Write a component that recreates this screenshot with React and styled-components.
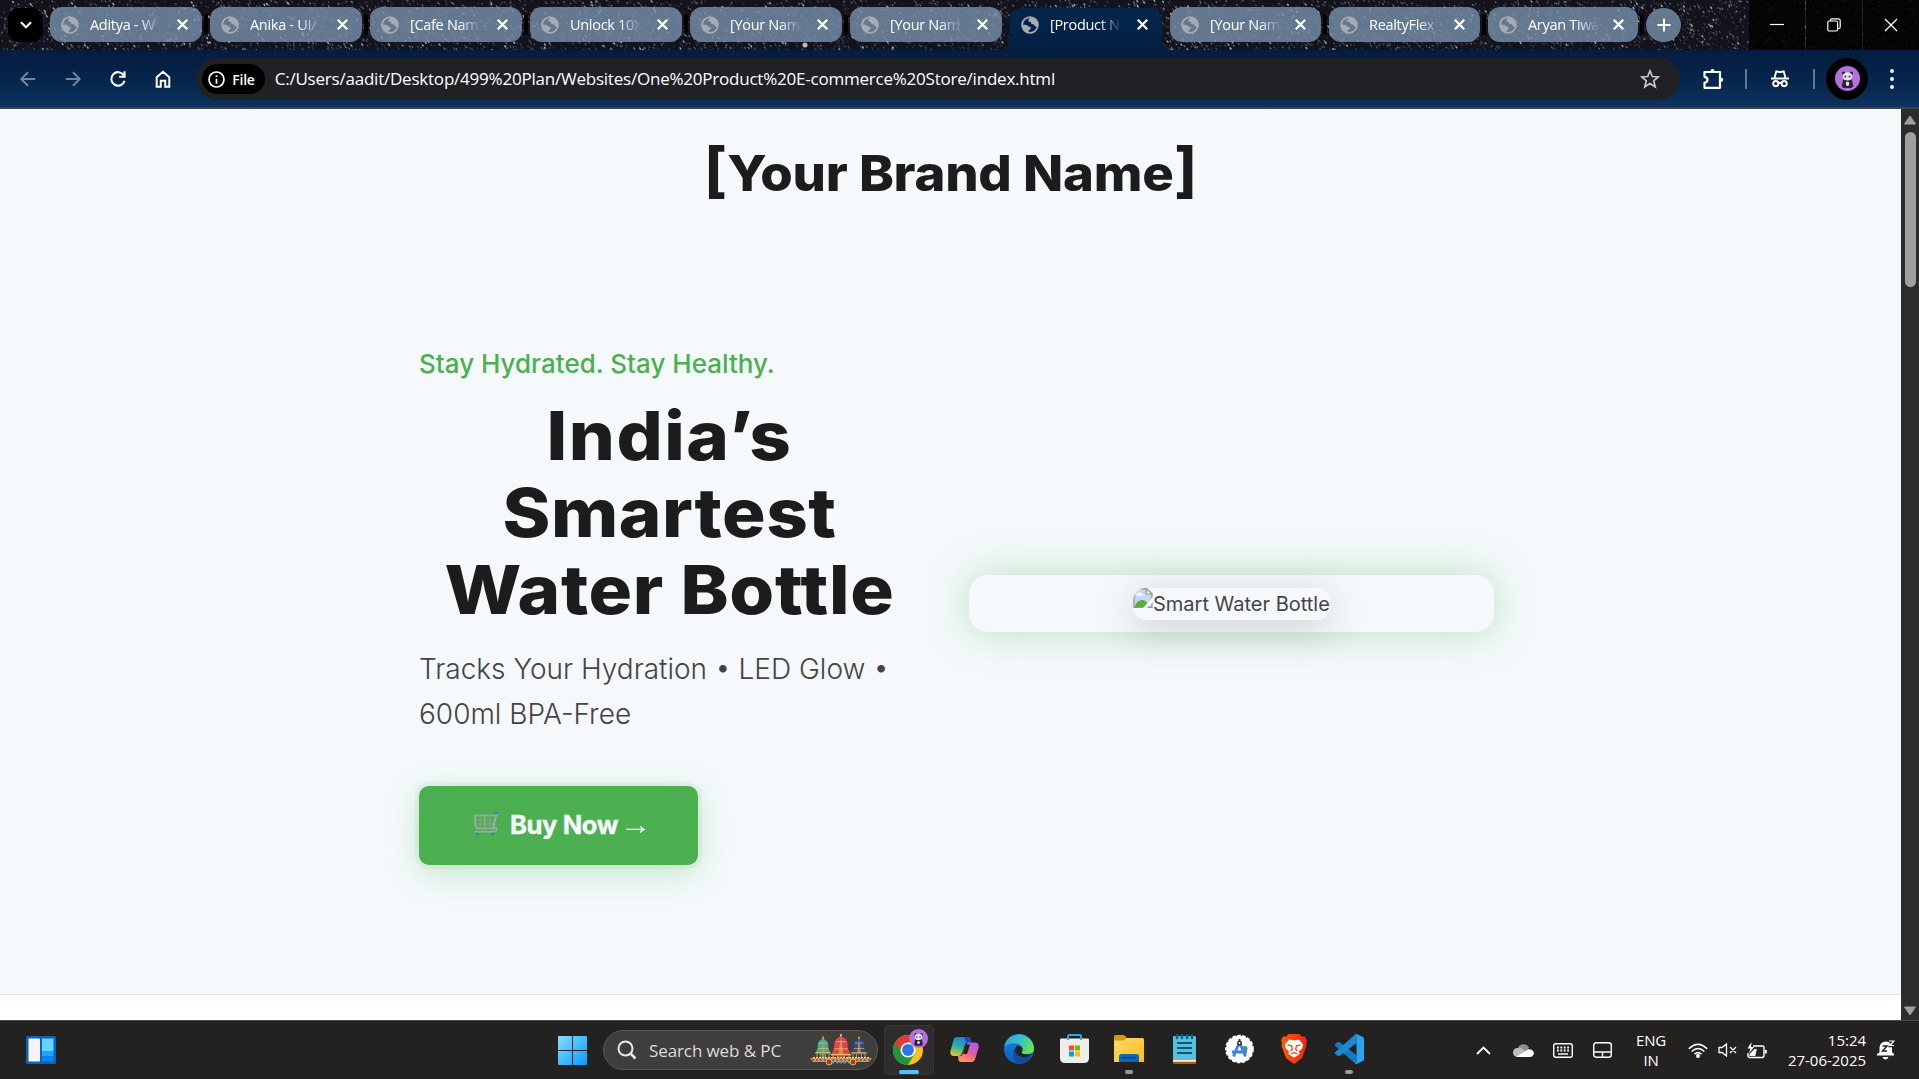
import React from 'react';
import styled, { createGlobalStyle, css } from 'styled-components';

const ui = '"Segoe UI", "Open Sans", "Noto Sans", sans-serif';
const body = 'Inter, "Liberation Sans", sans-serif';

const Global = createGlobalStyle`
  * { box-sizing: border-box; }
  html, body { margin: 0; height: 100%; overflow: hidden; }
  h1, h2, p { margin: 0; }
  button { border: 0; padding: 0; background: none; font: inherit; color: inherit; }
  svg { display: block; flex: none; }
`;

const Screen = styled.div`
  display: flex;
  flex-direction: column;
  width: 1919px;
  height: 1079px;
  overflow: hidden;
  font-family: ${ui};
`;

/* ---------- tab strip ---------- */
const TabStrip = styled.header`
  position: relative;
  display: flex;
  height: 50px;
  flex: none;
  padding: 7px 0 0 8px;
  background: #13131d;
  overflow: hidden;
`;
const Sky = styled.svg`
  position: absolute;
  inset: 0;
`;
const TabSearch = styled.button`
  position: relative;
  display: grid;
  place-items: center;
  width: 35px;
  height: 34px;
  margin: 1px 7px 0 0;
  border-radius: 11px;
  background: #000;
`;
const Tabs = styled.div`
  position: relative;
  display: flex;
`;
const Slot = styled.div`
  display: flex;
  width: ${(p) => p.$pitch}px;
  height: 43px;
`;
const Tab = styled.div`
  position: relative;
  display: flex;
  align-items: center;
  width: ${(p) => p.$pitch - 8}px;
  height: 35px;
  padding: 0 0 0 11px;
  border-radius: 12px;
  background: rgba(117, 142, 167, 0.82);
  color: #fff;
  ${(p) => p.$active && css`
    height: 42px;
    margin-top: 1px;
    padding-bottom: 9px;
    border-radius: 12px 12px 0 0;
    background: linear-gradient(#04264e, #041f41);
    &::before, &::after {
      content: '';
      position: absolute;
      bottom: 0;
      width: 10px;
      height: 10px;
    }
    &::before { left: -10px; background: radial-gradient(circle at 0 0, transparent 9.5px, #041f41 10px); }
    &::after { right: -10px; background: radial-gradient(circle at 100% 0, transparent 9.5px, #041f41 10px); }
  `}
`;
const TabTitle = styled.span`
  width: 72px;
  margin: 0 ${(p) => (p.$pitch < 160 ? 13 : 14.5)}px 0 11px;
  white-space: nowrap;
  font-size: 14.5px;
  letter-spacing: -0.3px;
  line-height: 24px;
  mask-image: linear-gradient(90deg, #000 68%, transparent 100%);
`;
const TabGap = styled.i`
  width: 4px;
  height: 21px;
  margin: 7px 0 0 2px;
  border-radius: 2px;
  background: #000;
`;
const NewTab = styled.button`
  position: relative;
  display: grid;
  place-items: center;
  width: 35px;
  height: 34px;
  margin-top: 1px;
  border-radius: 50%;
  background: #64798f;
`;
const WindowButtons = styled.div`
  position: relative;
  display: flex;
  gap: 1px;
  height: 50px;
  margin: -7px 0 0 auto;
  background: rgba(70, 70, 80, 0.25);
`;
const WindowButton = styled.button`
  display: grid;
  place-items: center;
  width: 56px;
  background: rgba(0, 0, 0, 0.86);
`;

/* ---------- toolbar ---------- */
const Toolbar = styled.nav`
  display: flex;
  align-items: center;
  height: 59px;
  flex: none;
  padding: 0 0 0 6px;
  border-bottom: 2px solid #43404a;
  background: linear-gradient(#041d3d, #05254c 50%, #0e325e);
`;
const ToolButton = styled.button`
  display: grid;
  place-items: center;
  width: ${(p) => p.$w || 44.8}px;
  height: 40px;
  opacity: ${(p) => (p.$dim ? 0.45 : 1)};
`;
const Omnibox = styled.div`
  display: flex;
  align-items: center;
  flex: none;
  width: 1484px;
  height: 42px;
  margin: 1px 0 0 11px;
  padding: 0 20px 0 6px;
  border-radius: 21px;
  background: #202124;
  color: #fff;
`;
const FileChip = styled.span`
  display: flex;
  align-items: center;
  gap: 7px;
  width: 63px;
  height: 30px;
  padding-left: 6px;
  border-radius: 15px;
  background: #000;
  font-size: 14px;
  font-weight: 600;
  letter-spacing: -0.2px;
`;
const Url = styled.span`
  margin-left: 9.5px;
  flex: 1;
  font-size: 17px;
  line-height: 24px;
  letter-spacing: -0.22px;
  white-space: nowrap;
`;
const Divider = styled.i`
  width: 2px;
  height: 20px;
  background: #5d7790;
`;
const Avatar = styled.div`
  display: grid;
  place-items: center;
  width: 42px;
  height: 42px;
  margin-left: 11px;
  border-radius: 50%;
  background: #000;
`;

/* ---------- page ---------- */
const Viewport = styled.div`
  display: flex;
  height: 911px;
  flex: none;
`;
const Page = styled.main`
  width: 1901px;
  background: #fff;
  font-family: ${body};
`;
const Hero = styled.section`
  height: 886px;
  border-bottom: 1px solid #dfe4e7;
  background: #f5f9fc;
`;
const Brand = styled.h2`
  padding-top: 29px;
  text-align: center;
  color: #1c1c1e;
  font-size: 49px;
  line-height: 72px;
  font-weight: 800;
  letter-spacing: -0.2px;
  transform: scaleX(1.073);
`;
const Bracket = styled.span`
  font-size: 60px;
  font-weight: 700;
  line-height: 0;
`;
const HeroRow = styled.div`
  display: flex;
  justify-content: space-between;
  width: 1075px;
  margin: 135px 0 0 419px;
`;
const Copy = styled.div`
  width: 501px;
`;
const Tagline = styled.p`
  color: #4caf50;
  font-size: 26px;
  line-height: 38px;
  font-weight: 500;
`;
const Headline = styled.h1`
  margin-top: 14px;
  color: #1c1c1e;
  font-size: 67.5px;
  line-height: 77.2px;
  font-weight: 800;
  text-align: center;
  transform: scaleX(1.075);
`;
const HeadLine = styled.span`
  display: block;
  letter-spacing: ${(p) => p.$track}px;
`;
const Features = styled.p`
  margin-top: 18px;
  color: #444;
  font-size: 28px;
  line-height: 45px;
  font-weight: 300;
`;
const BuyButton = styled.button`
  display: flex;
  align-items: center;
  width: 279px;
  height: 79px;
  margin-top: 49px;
  padding: 0 0 2px 55px;
  border-radius: 10px;
  background: #4caf50;
  color: #f5f9fc;
  font-size: 25.6px;
  font-weight: 700;
  letter-spacing: -0.4px;
  box-shadow: 0 0 0 4px rgba(76, 175, 80, 0.07), 0 8px 32px rgba(76, 175, 80, 0.28);
`;
const BuyText = styled.span`
  margin: 0 5px 0 11px;
  -webkit-text-stroke: 0.4px #f5f9fc;
`;
const BuyArrow = styled.span`
  margin-top: 1px;
  font-family: "Liberation Sans", sans-serif;
  font-weight: 400;
  font-size: 25px;
  line-height: 1;
  transform: scale(1.28, 1.1);
  transform-origin: 50% 60%;
`;
const Visual = styled.div`
  display: grid;
  place-items: center;
  width: 525px;
  height: 57px;
  margin-top: 230px;
  border-radius: 19px;
  box-shadow: 0 0 40px rgba(76, 175, 80, 0.35);
  background: #f5f9fc;
`;
const Missing = styled.div`
  display: flex;
  width: 197px;
  height: 32px;
  border-radius: 13px;
  overflow: hidden;
  background: #f5f9fc;
  color: #444;
  font-size: 20px;
  line-height: 32px;
  white-space: nowrap;
`;
const MissingShadow = styled.div`
  border-radius: 13px;
  box-shadow: 0 8px 40px rgba(28, 28, 30, 0.2);
`;
const Scrollbar = styled.aside`
  display: flex;
  flex-direction: column;
  align-items: center;
  width: 18px;
  padding: 6px 0 4px;
  background: #2c2c2c;
`;
const Thumb = styled.div`
  width: 11px;
  height: 155px;
  margin: 7px 0 auto;
  border-radius: 6px;
  background: #9f9f9f;
`;

/* ---------- taskbar ---------- */
const Taskbar = styled.footer`
  display: flex;
  align-items: center;
  height: 59px;
  flex: none;
  padding: 0 14px 0 26px;
  border-top: 1px solid #4a4d4b;
  background: #242220;
  color: #fff;
`;
const StartButton = styled.button`
  margin-left: 502px;
`;
const Search = styled.div`
  display: flex;
  align-items: center;
  width: 275px;
  height: 40px;
  margin: 0 6px 0 16px;
  padding: 0 5px 0 13px;
  border: 1px solid #595755;
  border-radius: 20px;
  background: #403e3c;
  color: #dcdcdc;
  font-size: 17px;
  white-space: nowrap;
`;
const SearchText = styled.span`
  flex: 1;
  margin-left: 12px;
  letter-spacing: -0.1px;
`;
const AppTile = styled.div`
  display: flex;
  flex-direction: column;
  align-items: center;
  justify-content: flex-end;
  width: ${(p) => (p.$active ? 50 : 55)}px;
  height: 50px;
  padding-bottom: 1px;
  border-radius: 5px;
  ${(p) => p.$active && css`
    margin-right: 2.5px;
    background: #2f2d2b;
    box-shadow: inset 0 0 0 1px #393735;
  `}
`;
const IconBox = styled.div`
  display: grid;
  place-items: center;
  height: 41px;
  margin-bottom: 1px;
`;
const Mark = styled.i`
  width: ${(p) => p.$w || 0}px;
  height: 4px;
  border-radius: 2px;
  background: ${(p) => p.$c || 'transparent'};
`;
const Tray = styled.div`
  display: flex;
  align-items: center;
  margin-left: auto;
`;
const TrayItem = styled.div`
  display: grid;
  place-items: center;
  width: ${(p) => p.$w}px;
`;
const TrayText = styled.div`
  width: ${(p) => p.$w}px;
  text-align: ${(p) => p.$align || 'center'};
  font-size: 15px;
  line-height: 20px;
  letter-spacing: ${(p) => p.$track || -0.2}px;
  white-space: nowrap;
`;

/* ---------- drawings ---------- */
const starPaths = (() => {
  let seed = 71;
  const rnd = () => {
    seed = (seed * 16807) % 2147483647;
    return seed / 2147483647;
  };
  const groups = ['', '', '', ''];
  for (let i = 0; i < 5600; i++) {
    const x = (rnd() * 1919).toFixed(1);
    const y = (rnd() * 50).toFixed(1);
    const g = rnd();
    const k = g < 0.5 ? 0 : g < 0.78 ? 1 : g < 0.93 ? 2 : 3;
    groups[k] += `M${x} ${y}l.8 1`;
  }
  return groups;
})();
const Stars = () => (
  <Sky width="1919" height="50" fill="none" strokeLinecap="round">
    {starPaths.map((d, i) => (
      <path key={i} d={d} stroke="#cdcfe2" strokeWidth={i === 3 ? 1.4 : 1.1} opacity={[0.17, 0.32, 0.5, 0.78][i]} />
    ))}
    <circle cx="805" cy="45" r="2.5" fill="#bdb9b4" />
  </Sky>
);
const Globe = () => (
  <svg width="18" height="18" viewBox="0 0 18 18">
    <circle cx="9" cy="9" r="7.9" fill="none" stroke="#a7abb0" strokeWidth="1.8" />
    <path d="M9.5 1 7.4 3.8l.3 2 2.2.3.4 2 2.2.2 1.6 2 2.2.8a8 8 0 0 0-2.8-8.6z M1 8.6l4.6.5 2 1.4 2 .4.2 1.8-1.9 1.5-.5 2.6A8 8 0 0 1 1 8.6z" fill="#a7abb0" />
  </svg>
);
const Cross = ({ size = 10, w = 2 }) => (
  <svg width={size} height={size} viewBox="0 0 10 10" stroke="#fff" strokeWidth={w}>
    <path d="M.7.7l8.6 8.6M9.3.7.7 9.3" />
  </svg>
);
const Line = ({ s = 20, w = 2, d, c = '#fff', children, ...rest }) => (
  <svg width={s} height={s} viewBox="0 0 20 20" fill="none" stroke={c} strokeWidth={w} {...rest}>
    <path d={d} />
    {children}
  </svg>
);
const Panda = ({ s }) => (
  <svg width={s} height={s} viewBox="0 0 26 26">
    <circle cx="13" cy="13" r="13" fill="#b66fe0" />
    <circle cx="9" cy="7.5" r="1.7" fill="#222" />
    <circle cx="17" cy="7.5" r="1.7" fill="#222" />
    <path d="M8.500 14h9l1.500 7-2 2H9l-2-2z" fill="#26232a" />
    <ellipse cx="13" cy="10.8" rx="5" ry="4.2" fill="#e6e4ea" />
    <ellipse cx="10.8" cy="11" rx="1.200" ry="1" fill="#444" />
    <ellipse cx="15.200" cy="11" rx="1.200" ry="1" fill="#444" />
    <ellipse cx="13" cy="18.500" rx="1.800" ry="2.400" fill="#ddd" />
  </svg>
);
const Cart = () => (
  <svg width="25" height="26" viewBox="0 0 25 26" fill="none">
    <path d="M1 4.500h21l-3 13H5Q1.500 17 1.300 13z" stroke="#a5a6aa" strokeWidth="1.700" />
    <path d="M1.500 9h18.500M2 13h17.500M6.300 4.500v13M15.300 4.500v13" stroke="#8fa08f" strokeWidth="1" />
    <path d="M10.800 4.500v13" stroke="#a5a6aa" strokeWidth="1.300" />
    <path d="M23 2.200 18.800 17q4.500-1 4 2-.6 1.700-4 1.700H1" stroke="#a8a5ac" strokeWidth="1.600" />
    <path d="M20.500 2h4" stroke="#3f7ec4" strokeWidth="2.200" />
    <circle cx="3.200" cy="23" r="1.600" fill="#3f7ec4" />
    <circle cx="18.500" cy="23" r="1.600" fill="#3f7ec4" />
  </svg>
);
const BrokenImage = () => (
  <svg width="20" height="20" viewBox="0 0 20 20">
    <path d="M1 .8h12.500L19 6v13.200H1z" fill="#c6d6f6" stroke="#999" strokeWidth="1.400" />
    <path d="M13.300.8V6H19z" fill="#fff" stroke="#999" strokeWidth="1.200" />
    <path d="M3 7.500a2 2 0 0 1 2.300-2 2.400 2.400 0 0 1 4.300 1.200q1 .3.800.8z" fill="#fff" />
    <path d="M1.700 19q1.600-7 8-7 4 .2 6.500 7z" fill="#5aae37" />
    <path d="M20 9 10 20h4l6-6z" fill="#f5f9fc" />
  </svg>
);
const Widgets = () => (
  <svg width="30" height="28" viewBox="0 0 30 28">
    <rect width="30" height="28" rx="1.500" fill="#0b63b8" />
    <rect x="2.500" y="2.500" width="11.500" height="23" rx="1" fill="#f5f5f5" />
    <rect x="16" y="2.500" width="11.500" height="13" fill="#62d4ff" />
    <rect x="16" y="15.500" width="11.500" height="5" fill="#1fa2fb" />
    <rect x="16" y="20.500" width="11.500" height="5" fill="#0b83ec" />
  </svg>
);
const Start = () => (
  <svg width="29" height="29" viewBox="0 0 29 29">
    <defs>
      <linearGradient id="win" x1="0" y1="0" x2="1" y2="1">
        <stop stopColor="#83e1ff" />
        <stop offset="1" stopColor="#0a98fb" />
      </linearGradient>
    </defs>
    <path d="M0 1q0-1 1-1h13v14H0zM15 0h13q1 0 1 1v13H15zM0 15h14v14H1q-1 0-1-1zM15 15h14v13q0 1-1 1H15z" fill="url(#win)" />
  </svg>
);
const Chariot = ({ x, y, k = 1, a, b }) => (
  <g transform={`translate(${x} ${y}) scale(${k})`}>
    <path d="M8-2.500v4" stroke="#e9b43d" strokeWidth="1.500" />
    <path d="M8 0Q12 .8 13 4.500L13.500 9.500 15.500 14H.5L2.500 9.500 3 4.500Q4 .8 8 0z" fill={a} />
    <path d="M8 .3Q9.200 7 9.800 14H6.200Q6.800 7 8 .3z" fill={b} />
    <path d="M2.800 9.500h10.400M4 4h8" stroke="#f3c75a" strokeWidth=".6" />
    <path d="M.3 14h15.400" stroke="#f0c35a" strokeWidth="1.200" />
    <path d="M2 14.500v6M5.500 14.500v6M10.500 14.500v6M14 14.500v6" stroke="#c98b3a" strokeWidth="1.200" />
    <path d="M8 15v5.500" stroke={a} strokeWidth="3" />
  </g>
);
const Chariots = () => (
  <svg width="62" height="32" viewBox="0 0 62 32">
    <Chariot x={5} y={5} a="#3fae9c" b="#c98a55" />
    <Chariot x={41} y={5} a="#2d4b93" b="#b88437" />
    <Chariot x={20.500} y={2.500} k={1.300} a="#d94452" b="#e88a45" />
    <path d="M0 24h62l-3 4H3z" fill="#cf9a45" />
    <path d="M2 26h58" stroke="#7d4b96" strokeWidth="1.500" strokeDasharray="2 2" />
    <path d="M3 23.500h56" stroke="#f4dfa0" strokeWidth="1" strokeDasharray="2 1" />
    <path d="M22 28h18" stroke="#4aa3b4" strokeWidth="2.500" strokeDasharray="2 2" />
    {[19, 43].map((c) => (
      <circle key={c} cx={c} cy="28" r="3" fill="#9d3e35" stroke="#e6b657" />
    ))}
  </svg>
);
const Chrome = () => (
  <svg width="37" height="39" viewBox="0 0 37 39">
    <g transform="translate(2 6)">
      <circle cx="15" cy="15" r="15" fill="#fbc116" />
      <path d="M15 15 2 7.500A15 15 0 0 0 15 30l6.500-11.300z" fill="#229342" />
      <path d="M2 7.500 8.500 18.700 15 8z" fill="#229342" />
      <path d="M2 7.500A15 15 0 0 1 28 7.500H15L8.500 11.300 8 17z" fill="#e33b2e" />
      <circle cx="15" cy="15" r="7.500" fill="#fff" />
      <circle cx="15" cy="15" r="5.900" fill="#2c74e8" />
    </g>
    <g transform="translate(18 0)"><Panda s={19} /></g>
  </svg>
);
const Copilot = () => (
  <svg width="29" height="26" viewBox="0 0 29 26">
    <defs>
      <linearGradient id="ca" x1=".5" y1="0" x2=".2" y2="1">
        <stop stopColor="#1f7fe8" /><stop offset=".5" stopColor="#2bb49a" /><stop offset="1" stopColor="#e6c52c" />
      </linearGradient>
      <linearGradient id="cb" x1=".7" y1="0" x2=".3" y2="1">
        <stop stopColor="#a65cf0" /><stop offset=".5" stopColor="#e85a96" /><stop offset="1" stopColor="#ff9a56" />
      </linearGradient>
    </defs>
    <path d="M7 1h11q2 0 2.500 2l1 3.500h-4q-2 0-2.600 2.200L12 17q-.8 3-3 3H4Q0 20 .3 15.500L3.500 4Q4.400 1 7 1z" fill="url(#ca)" />
    <path d="M14 1h4q2 0 2.500 2l1 3.500h-5z" fill="#2446c8" />
    <path d="M22 6.500h3q4 0 3.700 4.500L25.500 22q-1 4-4 4H11q-2 0-2.600-2L8 20h2q2 0 2.700-2.500L16 9q1-2.500 3-2.500z" fill="url(#cb)" />
    <path d="M16 8.500h4L17 18h-4z" fill="#242220" />
  </svg>
);
const Edge = () => (
  <svg width="30" height="30" viewBox="0 0 30 30">
    <defs>
      <linearGradient id="ea" x1="0" y1=".2" x2="1" y2=".6"><stop stopColor="#2aa7dd" /><stop offset=".5" stopColor="#35c1c9" /><stop offset="1" stopColor="#6ee64c" /></linearGradient>
      <linearGradient id="eb" x1="0" y1="0" x2="0" y2="1"><stop stopColor="#1388d8" /><stop offset="1" stopColor="#0b5fbd" /></linearGradient>
    </defs>
    <circle cx="15" cy="15" r="15" fill="url(#eb)" />
    <path d="M.3 12.500A15 15 0 0 1 30 14.500q0 6-7.500 6-5 0-5-2.500 1-1 1-3 0-4.500-6-5.500-7.500-.8-12.200 3z" fill="url(#ea)" />
    <path d="M17.500 18q0 2.500 5 2.500 3.500 0 5.500-1.200.9.200.4 1A15 15 0 0 1 15 30Q9 27 9 20.500 9 15 13.500 12.500 18.500 12.500 18.500 15q0 2-1 3z" fill="#114f9e" />
    <path d="M13 11.500q5.500.5 5.500 3.500 0 2-1 3 0 2.500 5 2.500 3.500 0 5.500-1.200-5 5.500-11.500 3.200-5.500-2-5.500-7z" fill="#242220" />
  </svg>
);
const Store = () => (
  <svg width="29" height="29" viewBox="0 0 29 29">
    <path d="M8 7V2.200Q8 1 9.200 1h10.600Q21 1 21 2.200V7" fill="none" stroke="#26a8ea" strokeWidth="1.800" />
    <path d="M1 4.500h27q1 0 1 1V24q0 5-5 5H5q-5 0-5-5V5.500q0-1 1-1z" fill="#ededed" />
    <path d="M8 1.500v4.500M21 1.500v4.500" stroke="#26a8ea" strokeWidth="1.800" />
    <path d="M9 11.500h5v5H9z" fill="#f04e23" /><path d="M15 11.500h5v5h-5z" fill="#7ab800" />
    <path d="M9 17.500h5v5H9z" fill="#00a1f1" /><path d="M15 17.500h5v5h-5z" fill="#ffb900" />
  </svg>
);
const Folder = () => (
  <svg width="30" height="27" viewBox="0 0 30 27">
    <defs><linearGradient id="fo" x1="0" y1="0" x2="1" y2="1"><stop stopColor="#ffdb6b" /><stop offset="1" stopColor="#fdbb1c" /></linearGradient></defs>
    <path d="M0 1.500Q0 0 1.500 0h7.800q1 0 2 1L13 3l-2.500 5H0z" fill="#d9980a" />
    <path d="M0 5.500h9.500L13 3h15.500Q30 3 30 4.500V27H0z" fill="url(#fo)" />
    <path d="M5 27v-5.500Q5 19 7.500 19h15q2.500 0 2.500 2.500V27z" fill="#0b67bd" />
    <path d="M9 22.800h12" stroke="#0a3f7c" strokeWidth="1.400" strokeLinecap="round" />
  </svg>
);
const Notepad = () => (
  <svg width="23" height="30" viewBox="0 0 23 30">
    <path d="M0 27h23v2q0 1-1 1H1q-1 0-1-1z" fill="#b7590f" />
    <path d="M0 25h23v2.800H0z" fill="#f0f0f0" />
    <path d="M1 2h21q1 0 1 1v23H0V3q0-1 1-1z" fill="#58bfdc" />
    <path d="M4 9h15M4 14h15M4 19h15" stroke="#0f5876" strokeWidth="1.900" />
    <path d="M4 1.300v2.700M9 1.300v2.700M14 1.300v2.700M19 1.300v2.700" stroke="#0d6784" strokeWidth="2.500" strokeLinecap="round" />
  </svg>
);
const AndroidStudio = () => (
  <svg width="29" height="30" viewBox="0 0 29 30">
    <circle cx="14.500" cy="15" r="13.300" fill="#fff" stroke="#fff" strokeWidth="2" strokeDasharray="3.500 1.500" />
    <circle cx="20" cy="14.500" r="2.500" fill="#31a15f" />
    <path d="M14.500 8 8.500 22.500M14.500 8l6 14.500M7 18h15" fill="none" stroke="#3f80ee" strokeWidth="2.900" />
    <circle cx="14.500" cy="9" r="1.700" fill="#fff" stroke="#333" strokeWidth="1.600" />
    <path d="M14.500 5v2" stroke="#333" strokeWidth="1.800" />
  </svg>
);
const Brave = () => (
  <svg width="26" height="30" viewBox="0 0 26 30">
    <defs><linearGradient id="br"><stop stopColor="#ff5b10" /><stop offset="1" stopColor="#f4230d" /></linearGradient></defs>
    <path d="M7.500 0h11l2.500 2.700 2.500-.4L26 6l-1 3 .5 3-4.500 12-8 6-8-6L.5 12 1 9 0 6l2.500-3.700 2.500.4z" fill="url(#br)" />
    <path d="m8 5.500 5 .9 5-.9 4 5-.8 4-3.400 3 1 2.300-5.800 4-5.800-4 1-2.300-3.400-3-.8-4z" fill="#fff" />
    <path d="m6.500 10.800 4 1 .8 3.200-1.600 2M19.500 10.800l-4 1-.8 3.200 1.600 2M9.800 20l3.200-1.500 3.200 1.500" fill="none" stroke="#fb4214" strokeWidth="1.300" />
  </svg>
);
const VSCode = () => (
  <svg width="30" height="30" viewBox="0 0 30 30">
    <path d="M2 9.500 4 8q.7-.4 1.400.1L22.500 21v8.500Q21.500 30 20.500 29L.8 11.400Q0 10.500 2 9.500z" fill="#1479c4" />
    <path d="M2 20.500 4 22q.7.400 1.400-.1L22.500 9V.5Q21.500 0 20.500 1L.8 18.600Q0 19.500 2 20.500z" fill="#1a8ad6" />
    <path d="M20.500 29Q22 30.300 23 29.700l6-2.800q1-.5 1-1.700V4.800q0-1.200-1-1.700L23 .3Q22-.3 20.500 1q2-1 2 1v26q0 2-2 1z" fill="#2ba5f2" />
  </svg>
);

const tabs = [
  ['Aditya - W', 160], ['Anika - UI/', 160], ['[Cafe Nam', 160], ['Unlock 10X', 160], ['[Your Nam', 160],
  ['[Your Nam', 160], ['[Product N', 160, true], ['[Your Nam', 159], ['RealtyFlex', 159], ['Aryan Tiwa', 158],
];
const apps = [
  { icon: <Chrome />, active: true, w: 20, c: '#4cc2ff' },
  { icon: <Copilot /> }, { icon: <Edge /> }, { icon: <Store /> },
  { icon: <Folder />, w: 8, c: '#9a9a9a' },
  { icon: <Notepad /> }, { icon: <AndroidStudio /> }, { icon: <Brave /> },
  { icon: <VSCode />, w: 8, c: '#9a9a9a' },
];

export default function App() {
  return (
    <Screen>
      <Global />
      <TabStrip>
        <Stars />
        <TabSearch><svg width="12" height="8" viewBox="0 0 12 8" fill="none" stroke="#fff" strokeWidth="2.200"><path d="m1 1.300 5 5 5-5" /></svg></TabSearch>
        <Tabs>
          {tabs.map(([title, pitch, active], i) => (
            <Slot key={i} $pitch={pitch}>
              <Tab $pitch={pitch} $active={active}>
                <Globe />
                <TabTitle $pitch={pitch}>{title}</TabTitle>
                <Cross size={11} />
              </Tab>
              {i !== 5 && i !== 6 && <TabGap />}
            </Slot>
          ))}
        </Tabs>
        <NewTab><svg width="14" height="14" viewBox="0 0 14 14" stroke="#fff" strokeWidth="2"><path d="M7 .5v13M.5 7h13" /></svg></NewTab>
        <WindowButtons>
          <WindowButton><svg width="14" height="14" stroke="#fff" strokeWidth="1.200"><path d="M0 6.500h14" /></svg></WindowButton>
          <WindowButton><svg width="14" height="14" fill="none" stroke="#fff" strokeWidth="1.200"><rect x=".8" y="3" width="9.800" height="10" rx="1.500" /><path d="M3.500 3V2q0-1.200 1.200-1.200h6.500q2 0 2 2v6.500q0 1.200-1.200 1.200h-1" /></svg></WindowButton>
          <WindowButton><Cross size={14} w={0.9} /></WindowButton>
        </WindowButtons>
      </TabStrip>

      <Toolbar>
        <ToolButton $dim><Line d="M18 10H3M10 2.500 2.500 10l7.500 7.500" s={18} /></ToolButton>
        <ToolButton $dim><Line d="M2 10h15M10 2.500l7.500 7.500-7.500 7.500" s={18} /></ToolButton>
        <ToolButton><Line d="M16.500 6A7.500 7.500 0 1 0 17.300 12M17.300 1.500v6h-6" s={18} w={2.300} /></ToolButton>
        <ToolButton><Line d="M3 18.500V8l7-6 7 6v10.500h-4.500V12h-5v6.500z" s={18} w={2.200} /></ToolButton>
        <Omnibox>
          <FileChip>
            <Line d="M10 9v6M10 5v2" s={17} w={2}><circle cx="10" cy="10" r="8.800" /></Line>
            File
          </FileChip>
          <Url>C:/Users/aadit/Desktop/499%20Plan/Websites/One%20Product%20E-commerce%20Store/index.html</Url>
          <Line s={20} w={1.700} c="#c7c7c7" d="m10 1.800 2.300 5.700 6 .4-4.600 3.900 1.500 6L10 14.500l-5.200 3.300 1.500-6L1.700 7.900l6-.4z" />
        </Omnibox>
        <ToolButton $w={65}>
          <svg width="22" height="22" viewBox="0 0 22 22" fill="none" stroke="#fff" strokeWidth="2.200" strokeLinejoin="round">
            <path d="M2.500 4H18v15.800H2.500v-5q3-.5 3-3t-3-3z" /><path d="M8.500 3.300q0-2.300 2-2.300t2 2.300zM18.800 9.800q2.500 0 2.500 2t-2.500 2z" fill="#fff" stroke="none" />
          </svg>
        </ToolButton>
        <Divider />
        <ToolButton $w={66}>
          <svg width="18" height="18" viewBox="0 0 18 18" fill="none" stroke="#fff" strokeWidth="1.900">
            <path d="M0 8.500h18M3.500 8 5.300 1.300l3.700.9 3.700-.9L14.500 8" /><circle cx="4.800" cy="13.600" r="2.600" /><circle cx="13.200" cy="13.600" r="2.600" /><path d="M7.400 13.300q1.600-1 3.200 0" />
          </svg>
        </ToolButton>
        <Divider />
        <Avatar><Panda s={25} /></Avatar>
        <ToolButton $w={48}><svg width="4" height="22" fill="#fff"><circle cx="2" cy="3" r="1.900" /><circle cx="2" cy="11" r="1.900" /><circle cx="2" cy="19" r="1.900" /></svg></ToolButton>
      </Toolbar>

      <Viewport>
        <Page>
          <Hero>
            <Brand><Bracket>[</Bracket>Your Brand Name<Bracket>]</Bracket></Brand>
            <HeroRow>
              <Copy>
                <Tagline>Stay Hydrated. Stay Healthy.</Tagline>
                <Headline>
                  <HeadLine $track={1.4}>India’s</HeadLine>
                  <HeadLine $track={0.5}>Smartest</HeadLine>
                  <HeadLine $track={0.6}>Water Bottle</HeadLine>
                </Headline>
                <Features>Tracks Your Hydration • LED Glow • 600ml BPA-Free</Features>
                <BuyButton><Cart /><BuyText>Buy Now</BuyText><BuyArrow>→</BuyArrow></BuyButton>
              </Copy>
              <Visual>
                <MissingShadow>
                  <Missing><BrokenImage />Smart Water Bottle</Missing>
                </MissingShadow>
              </Visual>
            </HeroRow>
          </Hero>
        </Page>
        <Scrollbar>
          <svg width="12" height="10"><path d="M6 1 11.500 9H.5z" fill="#9f9f9f" stroke="#9f9f9f" strokeLinejoin="round" /></svg>
          <Thumb />
          <svg width="12" height="10"><path d="M6 9 11.500 1H.5z" fill="#9f9f9f" stroke="#9f9f9f" strokeLinejoin="round" /></svg>
        </Scrollbar>
      </Viewport>

      <Taskbar>
        <Widgets />
        <StartButton><Start /></StartButton>
        <Search>
          <svg width="20" height="20" viewBox="0 0 20 20" fill="none" stroke="#e8e8e8" strokeWidth="2"><circle cx="8.500" cy="8.500" r="7" /><path d="m13.500 13.500 5 5" strokeWidth="2.500" /></svg>
          <SearchText>Search web &amp; PC</SearchText>
          <Chariots />
        </Search>
        {apps.map((a, i) => (
          <AppTile key={i} $active={a.active}>
            <IconBox>{a.icon}</IconBox>
            <Mark $w={a.w} $c={a.c} />
          </AppTile>
        ))}
        <Tray>
          <TrayItem $w={40}><svg width="15" height="9" fill="none" stroke="#fff" strokeWidth="1.800"><path d="m1 8 6.500-6.500L14 8" /></svg></TrayItem>
          <TrayItem $w={40}>
            <svg width="21" height="14" viewBox="0 0 21 14"><path d="M5 5a6 6 0 0 1 11-.5l-5 6z" fill="#8f8f8f" /><path d="M4.500 14a4.500 4.500 0 0 1 0-9q3-.6 5 1.200l5.500 4z" fill="#bdbdbd" /><path d="M3.500 13.800 15.500 6q5 .3 5.300 4.300-.4 3.700-4.300 3.700H4.500z" fill="#fff" /></svg>
          </TrayItem>
          <TrayItem $w={40}>
            <svg width="20" height="15" fill="none" stroke="#fff" strokeWidth="1.400"><rect x=".7" y=".7" width="18.600" height="13.600" rx="2" /><path d="M4 4.500h12M4 7.500h12" strokeDasharray="1.800 1.600" strokeWidth="1.800" /><path d="M5 11h10" /></svg>
          </TrayItem>
          <TrayItem $w={39}>
            <svg width="19" height="16" fill="none" stroke="#fff" strokeWidth="1.400"><rect x=".7" y=".7" width="17.600" height="14.600" rx="2.500" /><path d="M1 10h17M9.500 10v5" /></svg>
          </TrayItem>
          <TrayText $w={58}>ENG<br />IN</TrayText>
          <TrayItem $w={36}>
            <svg width="20" height="15" viewBox="0 0 20 15" fill="none" stroke="#fff" strokeWidth="1.600"><path d="M.8 5.800q9.200-9 18.400 0M3.700 8.500q6.300-6 12.600 0M6.500 11.200q3.500-3.200 7 0" /><circle cx="10" cy="13" r="1.200" fill="#fff" /></svg>
          </TrayItem>
          <TrayItem $w={22}>
            <svg width="19" height="14" viewBox="0 0 19 14" fill="none" stroke="#fff" strokeWidth="1.300"><path d="M1 4.500h3L8.500 1v12L4 9.500H1zM12 4l6 6M18 4l-6 6" /></svg>
          </TrayItem>
          <TrayItem $w={38}>
            <svg width="20" height="17" viewBox="0 0 20 17" fill="none" stroke="#fff" strokeWidth="1.400"><path d="M6 4h9.500Q17 4 17 5.500v8q0 2-2 2H3q-2 0-2-2V11" /><path d="M18.800 8v3.500" strokeWidth="2" /><path d="M4.500 0 .5 6.500h2.800L2 11.500l5-6.500H4zM2.500 14V12l5-5h2.300l-1.500 7z" fill="#fff" stroke="none" /></svg>
          </TrayItem>
          <TrayText $w={90} $align="right" $track={-0.02}>15:24<br />27-06-2025</TrayText>
          <TrayItem $w={39}>
            <svg width="18" height="20" viewBox="0 0 18 20"><path d="M1 14.500 2.500 12V7.500Q3 2 9 1.500q5.500.5 6 6V12l1.500 2.500z" fill="#fff" /><path d="M0 13.500h17v2H0zM5.500 17h6q-1 2.500-3 2.500t-3-2.500z" fill="#fff" /><path d="M5.500 6h4.500l-4.500 5H10M12 1.500h5L12.500 6.500H17" fill="none" stroke="#242220" strokeWidth="1.500" /><path d="M12 1h5l-4 4.500h4" fill="none" stroke="#fff" strokeWidth="1.200" /></svg>
          </TrayItem>
        </Tray>
      </Taskbar>
    </Screen>
  );
}
